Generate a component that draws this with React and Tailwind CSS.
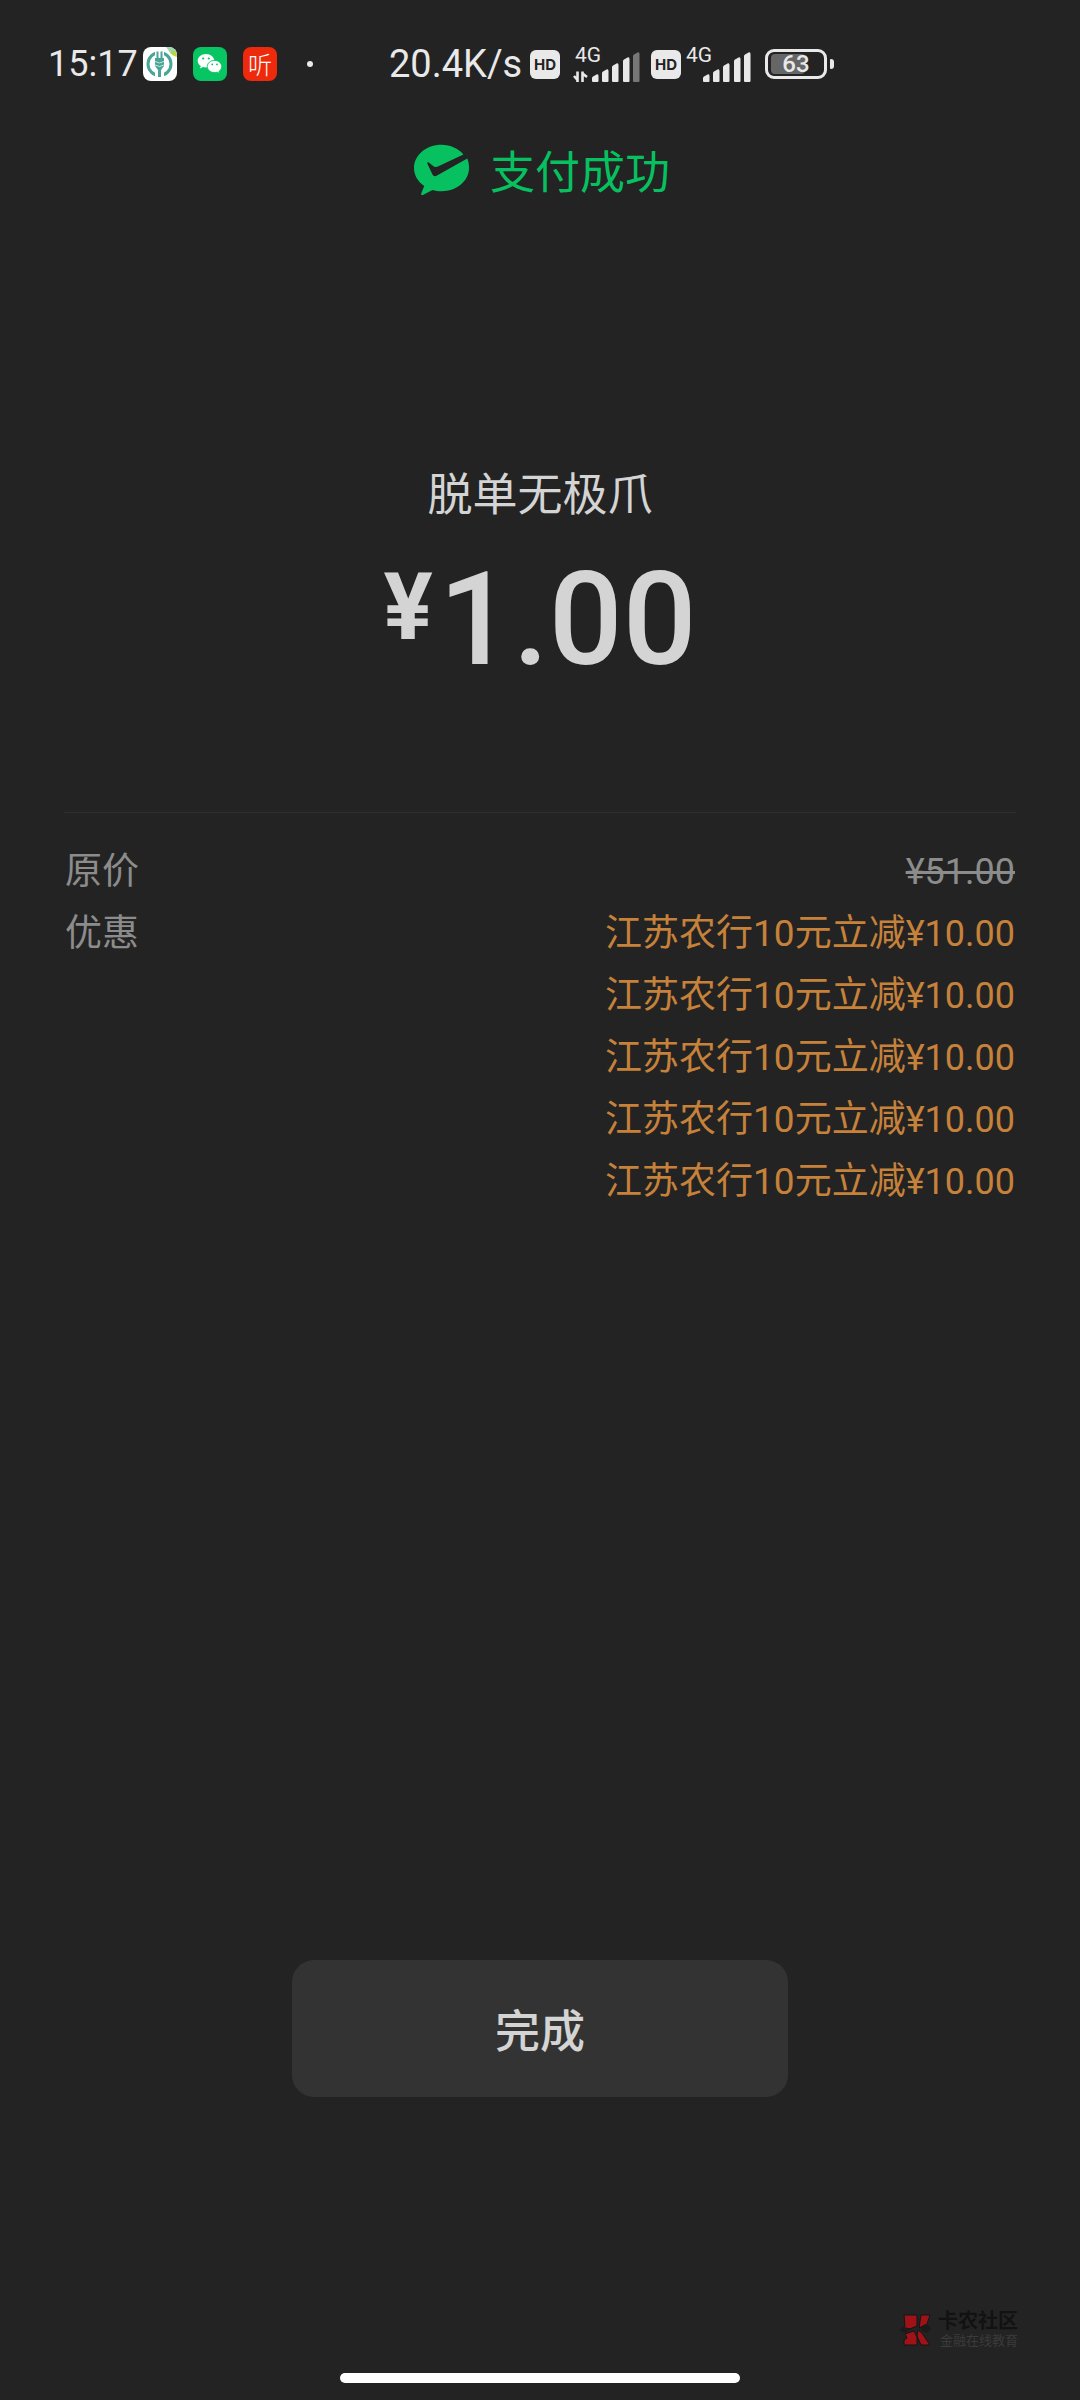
const DISCOUNTS = [
    { id: 1, label: "江苏农行10元立减", amount: "¥10.00" },
    { id: 2, label: "江苏农行10元立减", amount: "¥10.00" },
    { id: 3, label: "江苏农行10元立减", amount: "¥10.00" },
    { id: 4, label: "江苏农行10元立减", amount: "¥10.00" },
    { id: 5, label: "江苏农行10元立减", amount: "¥10.00" },
];

// Signal bars have slanted tops, from shortest to tallest
const BARS = [
    { x: 19, top: 22 },
    { x: 29, top: 17 },
    { x: 39, top: 11 },
    { x: 50, top: 5 },
    { x: 60, top: 0 },
];

const BankIcon = () => (
    <svg viewBox="0 0 34 34" className="size-[34px]" aria-hidden="true">
        <rect width="34" height="34" rx="8" fill="#fff" />
        <path d="M23 0h3a8 8 0 0 1 8 8v1l-6-2z" fill="#9fd6b0" />
        <path d="M28 4l4 0 2 6-5-2z" fill="#b5d932" />
        <circle cx="16.5" cy="17" r="11.5" fill="none" stroke="#4aa596" strokeWidth="3" />
        <path d="M12 3h9v7h-9zM12 25h9v7h-9z" fill="#fff" />
        <path d="M14.5 4.500v8M18.500 4.500v8" stroke="#4aa596" strokeWidth="2" />
        <path d="M12 11h9v8l-3 4v7h-3v-7l-3-4z" fill="#4aa596" />
        <path d="M12 14.5l4.500 1.500 4.500-1.500M12 18l4.500 1.500L21 18" fill="none" stroke="#fff" strokeWidth=".7" />
    </svg>
);

const WeChatIcon = () => (
    <svg viewBox="0 0 34 34" className="size-[34px]" aria-hidden="true">
        <rect width="34" height="34" rx="8" fill="#07c563" />
        <path d="M13 7c-4.700 0-8.300 3-8.300 6.800 0 2.200 1.200 4 3.100 5.300l-.8 2.500 3-1.500c1 .3 2 .4 3 .4 4.600 0 8.300-3 8.300-6.700S17.600 7 13 7z" fill="#fff" />
        <path d="M21.600 13.400c-4.100 0-7.300 2.700-7.300 6.100s3.200 6.100 7.300 6.100c.9 0 1.700-.1 2.500-.4l2.400 1.300-.6-2.100c1.700-1.200 2.800-2.900 2.800-4.900 0-3.400-3.200-6.100-7.100-6.100z" fill="#fff" stroke="#07c563" strokeWidth=".9" />
        <circle cx="10.2" cy="11.5" r="1.1" fill="#07c563" />
        <circle cx="15.8" cy="11.5" r="1.1" fill="#07c563" />
        <circle cx="19.2" cy="17.4" r=".9" fill="#07c563" />
        <circle cx="24" cy="17.4" r=".9" fill="#07c563" />
    </svg>
);

const HdBadge = () => (
    <span className="flex h-[29px] w-[30px] items-center justify-center rounded-[6px] bg-[#e9e9e9] font-['Inter'] text-[15px] font-bold leading-none text-[#232323]">
        HD
    </span>
);

const Signal = ({ weak }) => (
    <span className="relative block h-[36px] w-[67px]">
        <span className="absolute left-[2px] top-0 text-[21px] leading-[18px]">4G</span>
        <svg viewBox="0 0 67 30" className="absolute bottom-0 left-0 h-[30px] w-[67px]" aria-hidden="true">
            {weak && (
                <path d="M4.500 30V19.500M4.500 28L1 24M9.500 30V19.500M9.500 21.500L14 25" fill="none" stroke="#e9e9e9" strokeWidth="2.6" />
            )}
            {BARS.map(({ x, top }, i) => (
                <path
                    key={x}
                    d={`M${x} ${top + 4}Q${x} ${top + 3} ${x + 1} ${top + 2.5}L${x + 5} ${top + 0.3}Q${x + 6.5} ${top} ${x + 6.5} ${top + 2}V29Q${x + 6.5} 30 ${x + 5.5} 30H${x + 1}Q${x} 30 ${x} 29Z`}
                    fill={weak && i === BARS.length - 1 ? "#777" : "#e9e9e9"}
                />
            ))}
        </svg>
    </span>
);

const Battery = () => (
    <span className="flex items-center gap-[3px]">
        <span className="relative flex h-[30px] w-[62px] items-center justify-center rounded-[9px] border-3 border-[#e9e9e9]">
            <span className="absolute bottom-[2px] left-[3px] top-[2px] w-[34px] rounded-[4px] bg-[#666]" />
            <span className="relative text-[24px] font-medium leading-none">63</span>
        </span>
        <span className="h-[10px] w-[4px] rounded-r-[3px] rounded-l-[1px] bg-[#e9e9e9]" />
    </span>
);

const StatusBar = () => (
    <header className="flex h-32 items-center pl-12 font-['Roboto','Noto_Sans_CJK_SC',sans-serif] text-[38px] leading-none text-[#e9e9e9]">
        <span className="w-[95px] text-[36px]">15:17</span>
        <div className="flex items-center gap-4">
            <BankIcon />
            <WeChatIcon />
            <span className="flex size-[34px] items-center justify-center rounded-[8px] bg-[#ee2a0c] font-['Noto_Sans_CJK_SC'] text-[24px] font-light text-white">
                听
            </span>
        </div>
        <span className="ml-[30px] size-[6px] rounded-full bg-[#e9e9e9]" />
        <span className="ml-[76px] w-[141px]">20.4K/s</span>
        <HdBadge />
        <div className="ml-[13px] flex items-center gap-[11px]">
            <Signal weak />
            <HdBadge />
        </div>
        <div className="ml-[3px] flex items-center gap-[14px]">
            <Signal />
            <Battery />
        </div>
    </header>
);

const PayIcon = () => (
    <svg viewBox="0 0 60 52" className="h-[52px] w-[60px]" aria-hidden="true">
        <path d="M31.500 .7C16.300 .7 4 11 4 24c0 7.500 4 13.600 10.200 18l-3 7.500c-.4 1.200 .8 2 1.700 1.400l9.600-5c2.900 .9 5.800 1.300 9 1.300C46.700 47.200 59 37 59 24c0-3.500-.5-6.500-1.700-9.500L27 31.600c-1.900 1.100-3.500 .9-4.500-1L17.300 19.500c-.4-1 .5-1.700 1.400-1.100l4.900 3.800c1.500 1 2.600 1.200 4.300 .4L53.400 10.400C48.400 4.500 40.500 .7 31.500 .7z" fill="#07c160" />
    </svg>
);

const Watermark = () => (
    <div className="absolute bottom-[50px] right-[62px] flex items-center gap-1">
        <svg viewBox="0 0 36 36" className="size-9" aria-hidden="true">
            <path d="M6 3h13v11l-7 3-8-1 3-2zM23 3h9l-3 9-8 4zM7 22l9-3 3 6v8H6v-5l3-2zM20 18l4 3 8 12h-9l-4-9z" fill="#9e1218" stroke="#151515" />
            <path d="M1 18l5-3 8 2-7 4zM24 14l7-1 2 4-4 4-6-3z" fill="#1b1b1b" />
        </svg>
        <div className="text-right">
            <p className="text-[20px] font-bold leading-[20px] text-[#121212]">卡农社区</p>
            <p className="text-[13px] leading-[20px] text-[#3b3b3b]">金融在线教育</p>
        </div>
    </div>
);

const App = () => {
    return (
        <div
            lang="zh-CN"
            className="relative flex min-h-screen flex-col bg-[#232323] font-['Noto_Sans_CJK_SC',sans-serif] text-[#d4d4d4]"
        >
            <StatusBar />

            <main className="flex flex-1 flex-col">
                {/* Result */}
                <div className="mt-3 flex items-center justify-center gap-5 text-[#07c160]">
                    <PayIcon />
                    <h1 className="text-[45px] leading-[60px]">支付成功</h1>
                </div>

                {/* Payee and amount */}
                <p className="mt-[262px] text-center text-[45px] leading-[60px]">脱单无极爪</p>
                <p className="mt-[23px] flex items-start justify-center gap-[6px] font-['Roboto'] font-medium">
                    <span className="text-[92px] font-bold leading-[126px]">¥</span>
                    <span className="text-[130px] leading-[150px]">1.00</span>
                </p>

                {/* Price breakdown */}
                <dl className="mx-16 mt-[117px] border-t border-[#2f2f2f] px-px pt-7 font-['Roboto','Noto_Sans_CJK_SC',sans-serif] text-[37px] leading-[62px]">
                    <div className="flex justify-between">
                        <dt className="text-[#8c8c8c]">原价</dt>
                        <dd className="text-[36px] text-[#8c8c8c] line-through">¥51.00</dd>
                    </div>
                    <div className="flex justify-between">
                        <dt className="text-[#8c8c8c]">优惠</dt>
                        <dd className="text-right text-[#c6813a]">
                            {DISCOUNTS.map(({ id, label, amount }) => (
                                <p key={id}>
                                    {label}
                                    <span className="text-[36px]">{amount}</span>
                                </p>
                            ))}
                        </dd>
                    </div>
                </dl>

                <button
                    type="button"
                    className="mx-auto mt-auto h-[137px] w-[46%] rounded-[22px] bg-[#333] text-[45px] font-medium leading-[60px]"
                >
                    完成
                </button>
            </main>

            <footer className="flex h-[303px] items-end justify-center pb-[17px]">
                <div className="h-[10px] w-[37%] rounded-full bg-white" />
            </footer>
            <Watermark />
        </div>
    );
};

export default App;
